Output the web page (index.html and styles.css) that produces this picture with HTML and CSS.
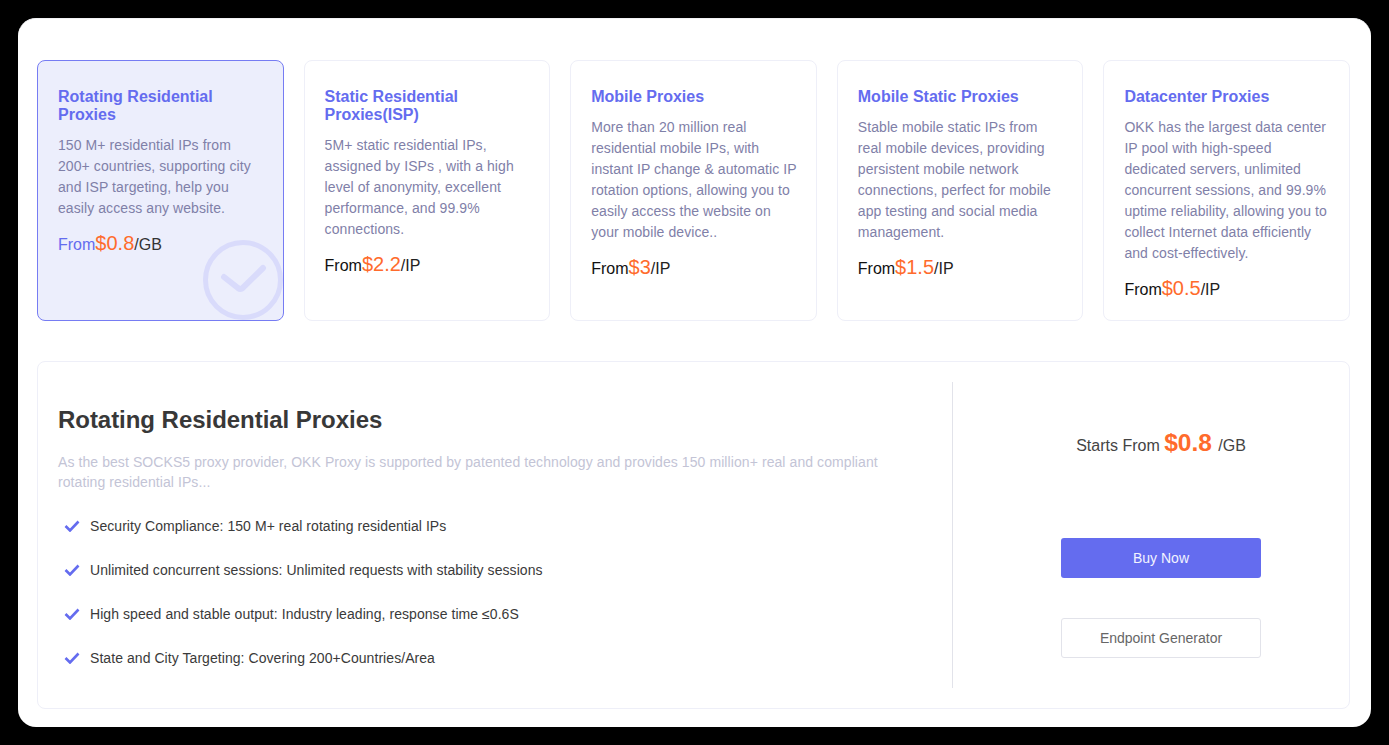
FILE: index.html
```html
<!DOCTYPE html>
<html lang="en">
<head>
    <meta charset="UTF-8">
    <meta name="viewport" content="width=device-width, initial-scale=1.0">
    <title>OKK Proxy - Products</title>
    <link rel="stylesheet" href="styles.css">
</head>
<body>
    <div class="window">
        <div class="cards">
            <div class="card active">
                <h3>Rotating Residential Proxies</h3>
                <p>150 M+ residential IPs from 200+ countries, supporting city and ISP targeting, help you easily access any website.</p>
                <div class="price"><span class="from">From</span><span class="amount">$0.8</span>/GB</div>
                <svg class="card-check" viewBox="0 0 80 80" fill="none">
                    <circle cx="40" cy="40" r="37.5" stroke="#d9dbfb" stroke-width="5"/>
                    <path d="M21 37l14 11a4 4 0 0 0 5-.3L60 28" stroke="#d9dbfb" stroke-width="6" stroke-linecap="round" stroke-linejoin="round"/>
                </svg>
            </div>
            <div class="card">
                <h3>Static Residential Proxies(ISP)</h3>
                <p>5M+ static residential IPs, assigned by ISPs , with a high level of anonymity, excellent performance, and 99.9% connections.</p>
                <div class="price"><span class="from">From</span><span class="amount">$2.2</span>/IP</div>
            </div>
            <div class="card">
                <h3>Mobile Proxies</h3>
                <p>More than 20 million real residential mobile IPs, with instant IP change &amp; automatic IP rotation options, allowing you to easily access the website on your mobile device..</p>
                <div class="price"><span class="from">From</span><span class="amount">$3</span>/IP</div>
            </div>
            <div class="card">
                <h3>Mobile Static Proxies</h3>
                <p>Stable mobile static IPs from real mobile devices, providing persistent mobile network connections, perfect for mobile app testing and social media management.</p>
                <div class="price"><span class="from">From</span><span class="amount">$1.5</span>/IP</div>
            </div>
            <div class="card">
                <h3>Datacenter Proxies</h3>
                <p>OKK has the largest data center IP pool with high-speed dedicated servers, unlimited concurrent sessions, and 99.9% uptime reliability, allowing you to collect Internet data efficiently and cost-effectively.</p>
                <div class="price"><span class="from">From</span><span class="amount">$0.5</span>/IP</div>
            </div>
        </div>

        <div class="detail">
            <div class="detail-info">
                <h2>Rotating Residential Proxies</h2>
                <p class="intro">As the best SOCKS5 proxy provider, OKK Proxy is supported by patented technology and provides 150 million+ real and compliant rotating residential IPs...</p>
                <ul class="features">
                    <li><svg viewBox="0 0 16 12" fill="none"><path d="M1.5 6l4.5 4.5L14.5 1.5" stroke="#646cef" stroke-width="2.6"/></svg>Security Compliance: 150 M+ real rotating residential IPs</li>
                    <li><svg viewBox="0 0 16 12" fill="none"><path d="M1.5 6l4.5 4.5L14.5 1.5" stroke="#646cef" stroke-width="2.6"/></svg>Unlimited concurrent sessions: Unlimited requests with stability sessions</li>
                    <li><svg viewBox="0 0 16 12" fill="none"><path d="M1.5 6l4.5 4.5L14.5 1.5" stroke="#646cef" stroke-width="2.6"/></svg>High speed and stable output: Industry leading, response time ≤0.6S</li>
                    <li><svg viewBox="0 0 16 12" fill="none"><path d="M1.5 6l4.5 4.5L14.5 1.5" stroke="#646cef" stroke-width="2.6"/></svg>State and City Targeting: Covering 200+Countries/Area</li>
                </ul>
            </div>
            <div class="detail-buy">
                <div class="starts">Starts From <span class="starts-amount">$0.8</span> /GB</div>
                <button class="buy">Buy Now</button>
                <button class="endpoint">Endpoint Generator</button>
            </div>
        </div>
    </div>
</body>
</html>
```

FILE: styles.css
```css
* {
    box-sizing: border-box;
}
body {
    margin: 0;
    background-color: #000;
    font-family: "Liberation Sans", Arial, sans-serif;
    overflow: hidden;
}
.window {
    width: 1353px;
    height: 709px;
    margin: 18px;
    padding: 42px 21px 18px 19px;
    background-color: #fff;
    border-top: 1px solid #f1f2f5;
    border-radius: 18px;
}
.cards {
    display: flex;
    gap: 20px;
    height: 261px;
    margin-top: -1px;
}
.card {
    position: relative;
    flex: 1;
    min-width: 0;
    padding: 27px 18px 0 20px;
    border: 1px solid #eeeff8;
    border-radius: 8px;
    overflow: hidden;
}
.card.active {
    background-color: #eceefc;
    border-color: #767cf3;
}
.card h3 {
    margin: 0;
    font-size: 16px;
    line-height: 18px;
    font-weight: 700;
    color: #646cef;
}
.card p {
    margin: 11px 0 0;
    font-size: 14px;
    line-height: 21px;
    letter-spacing: 0.08px;
    color: #7f80a8;
}
.price {
    margin-top: 10px;
    font-size: 16px;
    line-height: 28px;
    color: #222;
}
.from {
    color: #111;
}
.active .from {
    color: #646cef;
}
.active .price {
    color: #333;
}
.amount {
    font-size: 20px;
    color: #ff6b2c;
}
.card-check {
    position: absolute;
    right: 0;
    bottom: 0;
    width: 80px;
    height: 80px;
}
.detail {
    display: flex;
    height: 348px;
    margin-top: 40px;
    padding: 20px 0;
    border: 1px solid #eeeff8;
    border-radius: 8px;
}
.detail-info {
    width: 915px;
    padding: 0 60px 0 20px;
    border-right: 1px solid #e2e3ea;
}
.detail-info h2 {
    margin: 24px 0 0;
    font-size: 24px;
    line-height: 28px;
    font-weight: 700;
    letter-spacing: -0.04px;
    color: #383838;
}
.intro {
    margin: 18px 0 0;
    font-size: 14px;
    line-height: 20px;
    letter-spacing: 0.08px;
    color: #c3c4d6;
}
.features {
    margin: 12px 0 0;
    padding: 0;
    list-style: none;
}
.features li {
    display: flex;
    align-items: center;
    height: 44px;
    font-size: 14px;
    letter-spacing: 0.06px;
    color: #3a3a3a;
}
.features svg {
    width: 16px;
    height: 12px;
    margin: 0 10px 0 6px;
}
.detail-buy {
    flex: 1;
    display: flex;
    flex-direction: column;
    align-items: center;
    padding-left: 20px;
}
.starts {
    margin-top: 45px;
    font-size: 16px;
    line-height: 32px;
    color: #444;
}
.starts-amount {
    margin-right: 2px;
    font-size: 24.5px;
    font-weight: 700;
    color: #ff6b2c;
}
.buy, .endpoint {
    width: 200px;
    height: 40px;
    font-family: inherit;
    font-size: 14px;
    border-radius: 3px;
    cursor: pointer;
}
.buy {
    margin-top: 76px;
    background-color: #646cef;
    border: none;
    color: #f2f3ff;
}
.endpoint {
    margin-top: 40px;
    background-color: #fff;
    border: 1px solid #e2e3ea;
    color: #666;
}
```
